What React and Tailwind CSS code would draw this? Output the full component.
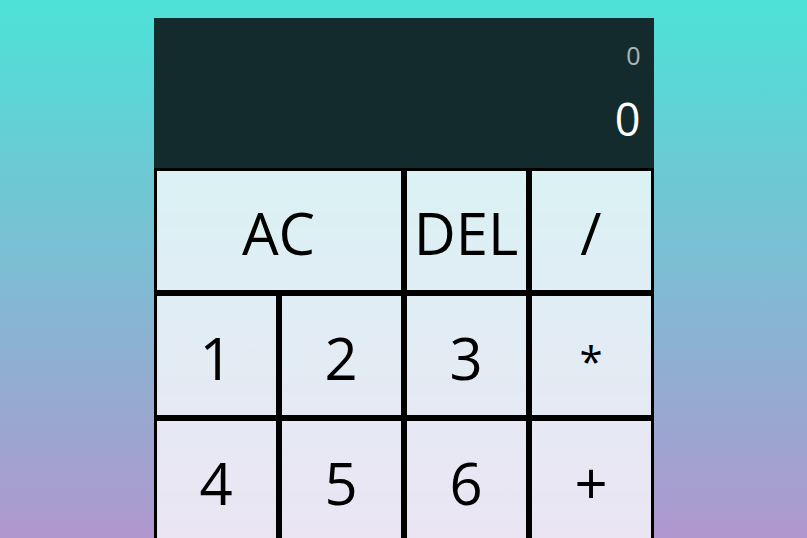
import React from "react";

const keys = [
  { label: "AC", span: true },
  { label: "DEL" },
  { label: "/" },
  { label: "1" },
  { label: "2" },
  { label: "3" },
  { label: "*", small: true },
  { label: "4" },
  { label: "5" },
  { label: "6" },
  { label: "+" },
  { label: "7" },
  { label: "8" },
  { label: "9" },
  { label: "-" },
  { label: "." },
  { label: "0" },
  { label: "=", span: true },
];

export default function App() {
  return (
    <div
      className="h-screen overflow-hidden bg-[linear-gradient(to_bottom,#4ce2d8,#b097cd)] pt-[18px] flex justify-center"
      style={{ fontFamily: '"Open Sans", "Noto Sans", sans-serif' }}
    >
      <div className="grid grid-cols-[repeat(4,125px)] auto-rows-[125px] grid-rows-[150px] self-start">
        <div className="col-span-4 bg-[#142b2e] flex flex-col items-end pt-[25px] pb-[27px] pr-[13px] gap-[28px]">
          <div className="text-[25px] leading-none text-white/65">0</div>
          <div className="text-[45px] leading-none text-white">0</div>
        </div>
        {keys.map((k, i) => (
          <button
            key={i}
            className={`${k.span ? "col-span-2" : ""} ${k.small ? "text-[42px] pt-[9px]" : "text-[58px] pt-1"} border-[3px] border-black bg-white/75 text-black leading-normal flex items-center justify-center`}
          >
            {k.label}
          </button>
        ))}
      </div>
    </div>
  );
}
